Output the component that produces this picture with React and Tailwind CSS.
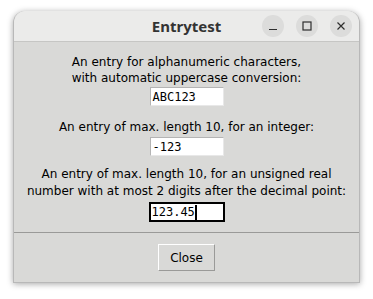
import React from "react";

export default function App() {
  const sans = { fontFamily: '"DejaVu Sans", sans-serif' };
  const mono = { fontFamily: '"DejaVu Sans Mono", monospace' };
  return (
    <div className="min-h-screen bg-white pt-[11px] pl-[13px]">
      <div className="w-[347px] h-[272px] rounded-t-[12px] bg-[#d9d9d7] flex flex-col overflow-hidden shadow-[0_1px_6px_rgba(0,0,0,0.35)] border-x border-b border-[#b8b8b8]">
        <div className="h-[31px] shrink-0 bg-[#ebebea] border-b border-[#c6c6c4] grid grid-cols-[1fr_auto_1fr] items-center">
          <div />
          <div className="text-[15px] font-bold text-[#333333]" style={{ fontFamily: '"Noto Sans", sans-serif' }}>Entrytest</div>
          <div className="flex justify-end gap-[12px] pr-[7px]">
            <div className="w-[22px] h-[22px] rounded-full bg-[#dcdcdb] flex items-center justify-center">
              <svg width="10" height="10" viewBox="0 0 10 10"><path d="M1 8.5H9" stroke="#2e2e2e" strokeWidth="1.2" /></svg>
            </div>
            <div className="w-[22px] h-[22px] rounded-full bg-[#dcdcdb] flex items-center justify-center">
              <svg width="10" height="10" viewBox="0 0 10 10"><rect x="1" y="1" width="8" height="8" fill="none" stroke="#2e2e2e" strokeWidth="1.2" /></svg>
            </div>
            <div className="w-[22px] h-[22px] rounded-full bg-[#dcdcdb] flex items-center justify-center">
              <svg width="10" height="10" viewBox="0 0 10 10"><path d="M1.5 1.5L8.5 8.5M8.5 1.5L1.5 8.5" stroke="#2e2e2e" strokeWidth="1.2" /></svg>
            </div>
          </div>
        </div>
        <div className="flex-1 flex flex-col items-center text-[12px] leading-[16px] text-black pt-[12px]" style={sans}>
          <div className="text-center whitespace-nowrap">An entry for alphanumeric characters,<br />with automatic uppercase conversion:</div>
          <div className="mt-[1px] w-[74px] h-[19px] bg-white border border-[#b4b4b4] border-r-[#e8e8e8] border-b-[#e8e8e8] flex items-center px-[2px] text-[12px]" style={mono}>ABC123</div>
          <div className="text-center whitespace-nowrap mt-[13px]">An entry of max. length 10, for an integer:</div>
          <div className="mt-[2px] w-[74px] h-[19px] bg-white border border-[#b4b4b4] border-r-[#e8e8e8] border-b-[#e8e8e8] flex items-center px-[2px] text-[12px]" style={mono}>-123</div>
          <div className="text-center whitespace-nowrap mt-[10px] leading-[17px]">An entry of max. length 10, for an unsigned real<br />number with at most 2 digits after the decimal point:</div>
          <div className="mt-[2px] w-[76px] h-[20px] bg-white border-2 border-black flex items-center px-[1px] text-[12px]" style={mono}>123.45<span className="inline-block w-[2px] h-[15px] bg-black" /></div>
          <div className="flex-1" />
          <div className="self-stretch border-t border-[#9a9a98] h-0" />
          <div className="self-stretch h-[49px] flex items-center justify-center">
            <div className="w-[57px] h-[27px] flex items-center justify-center border border-white border-r-[#9a9a98] border-b-[#9a9a98] text-[12px]" style={sans}>Close</div>
          </div>
        </div>
      </div>
    </div>
  );
}
